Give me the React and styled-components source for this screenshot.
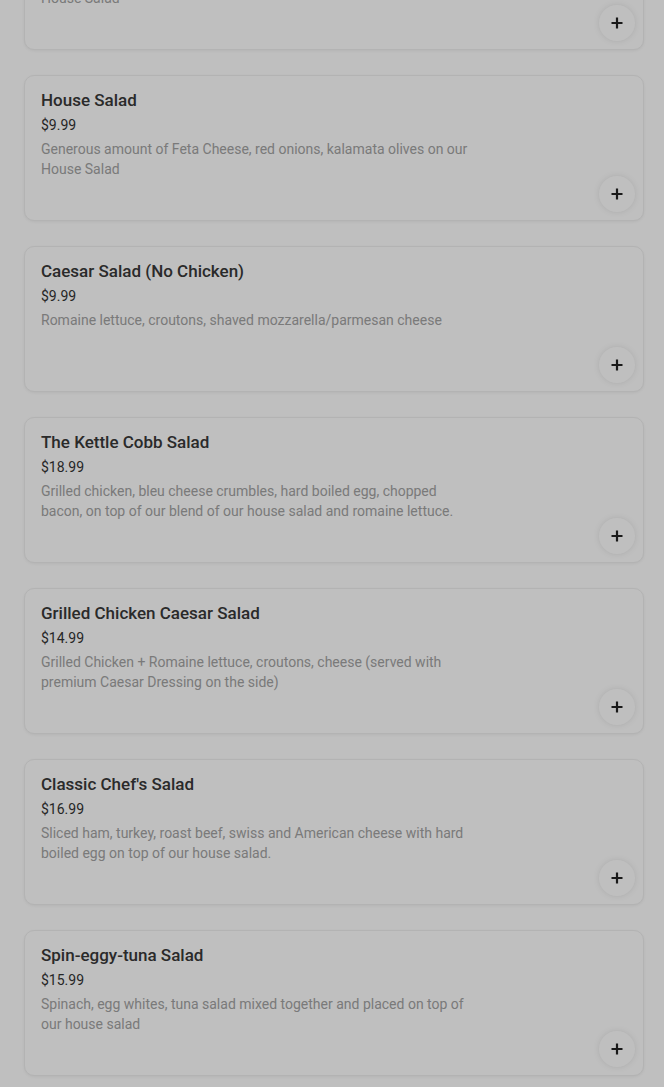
import styled, { createGlobalStyle } from "styled-components";

const GlobalStyle = createGlobalStyle`
  html, body {
    margin: 0;
    padding: 0;
    background: #ffffff;
    font-family: Roboto, "Liberation Sans", Arial, sans-serif;
    overflow: hidden;
  }
`;

const Page = styled.div`
  height: 1087px;
  overflow: hidden;
  position: relative;
`;

const List = styled.div`
  display: flex;
  flex-direction: column;
  gap: 25px;
  padding: 0 20px 0 24px;
  margin-top: -96px;
`;

const Card = styled.div`
  display: flex;
  justify-content: space-between;
  box-sizing: border-box;
  min-height: 146px;
  padding: 15px 8px 8px 16px;
  background: #fff;
  border: 1px solid #efefef;
  border-radius: 10px;
  box-shadow: 0 1px 3px rgba(0, 0, 0, 0.06);
`;

const Info = styled.div`
  display: flex;
  flex-direction: column;
  max-width: 436px;
`;

const Title = styled.div`
  font-size: 17px;
  font-weight: 500;
  line-height: 18px;
  color: #383838;
  margin-bottom: 7px;
`;

const Price = styled.div`
  font-size: 14px;
  line-height: 18px;
  color: #333;
  margin-bottom: 5px;
`;

const Desc = styled.div`
  font-size: 14px;
  line-height: 20px;
  color: #a3a3a3;
`;

const AddButton = styled.button`
  align-self: flex-end;
  flex-shrink: 0;
  width: 36px;
  height: 36px;
  border-radius: 50%;
  border: none;
  background: #fff;
  box-shadow: 0 0 6px rgba(0, 0, 0, 0.1);
  display: flex;
  align-items: center;
  justify-content: center;
  padding: 0;
`;

const Overlay = styled.div`
  position: absolute;
  inset: 0;
  background: rgba(0, 0, 0, 0.25);
`;

const items = [
  { name: "Greek Salad", price: "$9.99", desc: "Generous amount of Feta Cheese, red onions, kalamata olives on our House Salad" },
  { name: "House Salad", price: "$9.99", desc: "Generous amount of Feta Cheese, red onions, kalamata olives on our House Salad" },
  { name: "Caesar Salad (No Chicken)", price: "$9.99", desc: "Romaine lettuce, croutons, shaved mozzarella/parmesan cheese" },
  { name: "The Kettle Cobb Salad", price: "$18.99", desc: "Grilled chicken, bleu cheese crumbles, hard boiled egg, chopped bacon, on top of our blend of our house salad and romaine lettuce." },
  { name: "Grilled Chicken Caesar Salad", price: "$14.99", desc: "Grilled Chicken + Romaine lettuce, croutons, cheese (served with premium Caesar Dressing on the side)" },
  { name: "Classic Chef's Salad", price: "$16.99", desc: "Sliced ham, turkey, roast beef, swiss and American cheese with hard boiled egg on top of our house salad." },
  { name: "Spin-eggy-tuna Salad", price: "$15.99", desc: "Spinach, egg whites, tuna salad mixed together and placed on top of our house salad" },
];

const Plus = () => (
  <svg width="12" height="12" viewBox="0 0 12 12">
    <path d="M6 0.5v11M0.5 6h11" stroke="#222" strokeWidth="2.2" />
  </svg>
);

const App = () => (
  <Page>
    <GlobalStyle />
    <List>
      {items.map((it, i) => (
        <Card key={i}>
          <Info>
            <Title>{it.name}</Title>
            <Price>{it.price}</Price>
            <Desc>{it.desc}</Desc>
          </Info>
          <AddButton aria-label="add">
            <Plus />
          </AddButton>
        </Card>
      ))}
    </List>
    <Overlay />
  </Page>
);

export default App;
